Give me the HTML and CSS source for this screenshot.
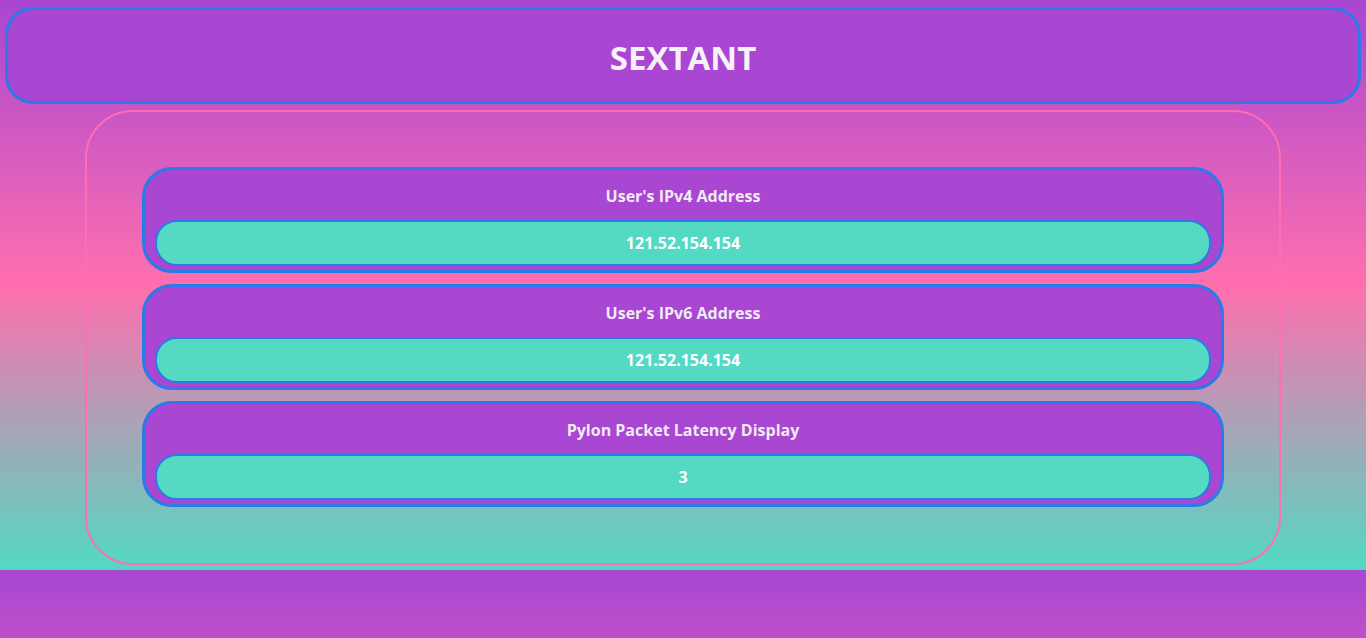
FILE: index.html
```html
<!DOCTYPE html>
<html lang="en">
<head>
<meta charset="utf-8">
<title>Sextant</title>
<link rel="stylesheet" href="styles.css">
</head>
<body>
<div class="page">
  <header class="header">
    <h1 class="title">SEXTANT</h1>
  </header>
  <main class="panel">
    <section class="card">
      <h2 class="card-title">User's IPv4 Address</h2>
      <div class="pill">121.52.154.154</div>
    </section>
    <section class="card">
      <h2 class="card-title">User's IPv6 Address</h2>
      <div class="pill">121.52.154.154</div>
    </section>
    <section class="card">
      <h2 class="card-title">Pylon Packet Latency Display</h2>
      <div class="pill">3</div>
    </section>
  </main>
</div>
</body>
</html>
```

FILE: styles.css
```css
html {
  background: linear-gradient(180deg, #a846d2 0%, #ff6fae 50%, #52d9c1 100%) 0 0 / 100% 570px repeat-y;
}
body {
  margin: 0;
  font-family: "Open Sans", "Noto Sans", sans-serif;
  color: #ffffff;
}
.page {
  display: flex;
  flex-direction: column;
  align-items: center;
  padding: 7px 5px 5px;
  gap: 6px;
}
.header {
  box-sizing: border-box;
  width: 100%;
  height: 97px;
  background: #a946d2;
  border: 3px solid #2a7be8;
  border-radius: 28px;
  display: flex;
  align-items: center;
  justify-content: center;
}
.title {
  margin: 0;
  font-size: 33px;
  line-height: 40px;
  font-weight: 700;
  color: #f7f1f8;
  padding-top: 4px;
}
.panel {
  box-sizing: border-box;
  width: 1196px;
  height: 455px;
  border: 2px solid #ff6eb4;
  border-radius: 48px;
  padding: 55px 55px;
  display: flex;
  flex-direction: column;
  gap: 11px;
}
.card {
  box-sizing: border-box;
  height: 106px;
  background: #a946d2;
  border: 3px solid #2a7be8;
  border-radius: 30px;
  padding: 16px 10px 4px;
  display: flex;
  flex-direction: column;
}
.card-title {
  margin: 0 0 14px;
  font-size: 16px;
  line-height: 20px;
  font-weight: 700;
  text-align: center;
  color: #f2eaf4;
}
.pill {
  box-sizing: border-box;
  height: 46px;
  background: #54d9c2;
  border: 2px solid #2a7be8;
  border-radius: 22px;
  display: flex;
  align-items: center;
  justify-content: center;
  font-size: 16px;
  font-weight: 700;
  color: #ffffff;
}
```
